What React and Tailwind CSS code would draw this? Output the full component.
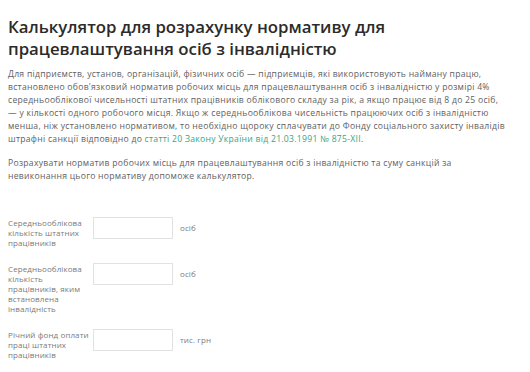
export default function App() {
  const font = { fontFamily: '"Open Sans", "Liberation Sans", sans-serif' };
  return (
    <div className="w-[530px] h-[372px] bg-white overflow-hidden px-2 pt-[16px]" style={font}>
      <h1 className="text-[16.8px] leading-[22px] font-semibold text-[#2b2b2b]">
        Калькулятор для розрахунку нормативу для<br />працевлаштування осіб з інвалідністю
      </h1>
      <p className="mt-[8px] text-[8.6px] leading-[13px] text-[#616161] tracking-[0.28px]">
        Для підприємств, установ, організацій, фізичних осіб — підприємців, які використовують найману працю,<br />
        встановлено обов'язковий норматив робочих місць для працевлаштування осіб з інвалідністю у розмірі 4%<br />
        середньооблікової чисельності штатних працівників облікового складу за рік, а якщо працює від 8 до 25 осіб,<br />
        — у кількості одного робочого місця. Якщо ж середньооблікова чисельність працюючих осіб з інвалідністю<br />
        менша, ніж установлено нормативом, то необхідно щороку сплачувати до Фонду соціального захисту інвалідів<br />
        штрафні санкції відповідно до <span className="text-[#35a585]">статті 20 Закону України від 21.03.1991 № 875-XII</span>.
      </p>
      <p className="mt-[11px] text-[8.6px] leading-[13px] text-[#616161] tracking-[0.28px]">
        Розрахувати норматив робочих місць для працевлаштування осіб з інвалідністю та суму санкцій за<br />
        невиконання цього нормативу допоможе калькулятор.
      </p>
      <div className="mt-[34px] flex flex-col gap-[15px]">
        <Field label={<>Середньооблікова<br />кількість штатних<br />працівників</>} unit="осіб" />
        <Field label={<>Середньооблікова<br />кількість<br />працівників, яким<br />встановлена<br />інвалідність</>} unit="осіб" />
        <Field label={<>Річний фонд оплати<br />праці штатних<br />працівників</>} unit="тис. грн" />
      </div>
    </div>
  );
}

function Field({ label, unit }) {
  return (
    <div className="flex items-start">
      <div className="w-[85px] text-[8px] leading-[10px] text-[#7a7a7a] tracking-[0.1px] pt-[1px]">{label}</div>
      <div className="w-[80px] h-[22px] border border-[#e2e2e2] bg-white"></div>
      <div className="ml-[7px] mt-[6px] text-[8px] leading-[10px] text-[#7a7a7a] tracking-[0.1px]">{unit}</div>
    </div>
  );
}
